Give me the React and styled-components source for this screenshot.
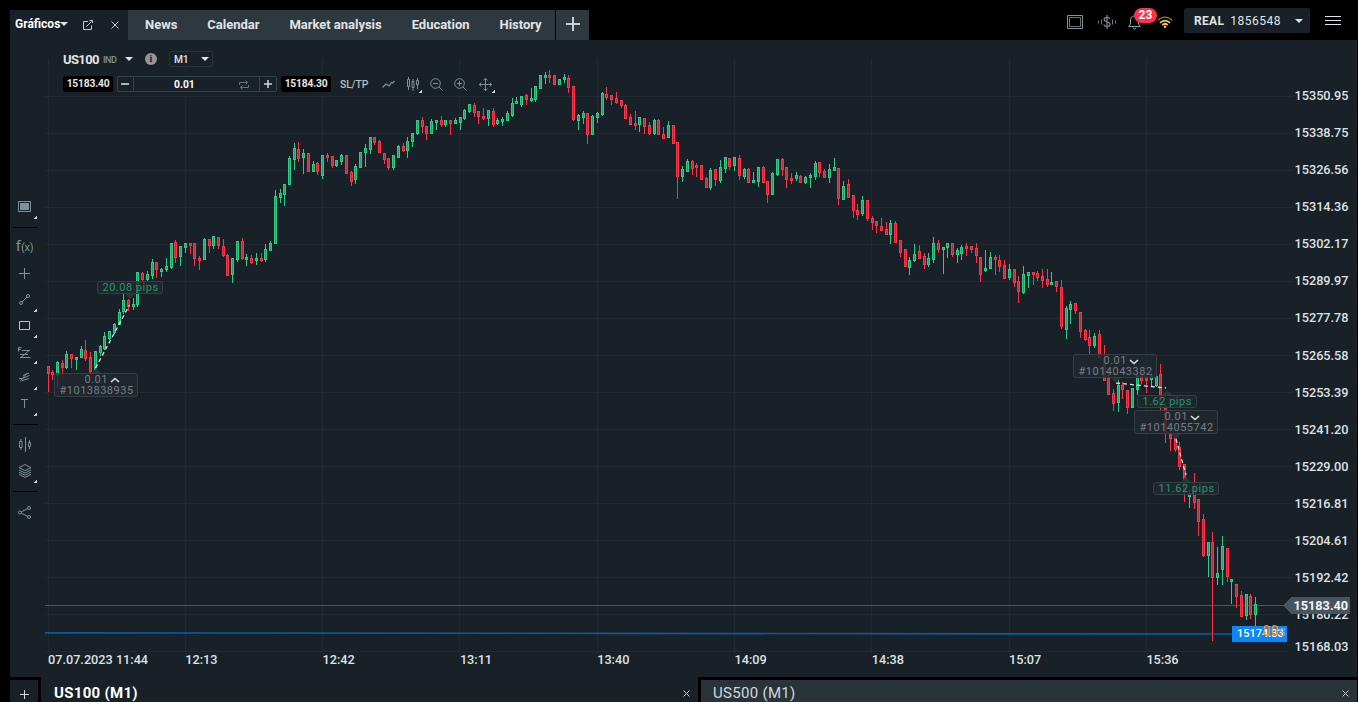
import styled, { createGlobalStyle } from "styled-components";


//==========================================================================
//  *** Data ***

const TABS = ["News", "Calendar", "Market analysis", "Education", "History"];

const PRICES = [
    "15350.95", "15338.75", "15326.56", "15314.36", "15302.17", "15289.97", "15277.78", "15265.58",
    "15253.39", "15241.20", "15229.00", "15216.81", "15204.61", "15192.42", "15180.22",
];

const TIMES = ["07.07.2023 11:44", "12:13", "12:42", "13:11", "13:40", "14:09", "14:38", "15:07", "15:36"];

// One candle per minute: direction (1 up, 0 down), high, body top, body bottom, low
const CANDLES = [
    [0,366,366,374,392],[0,370,372,375,380],[1,361,362,376,387],[0,360,363,368,377],[1,351,354,368,369],
    [0,354,354,359,368],[1,357,357,360,370],[1,346,349,358,358],[0,340,350,359,361],[0,352,357,372,373],
    [1,351,351,370,372],[1,345,346,353,356],[1,332,336,349,350],[1,331,331,339,340],[1,323,324,333,334],
    [1,309,312,325,325],[1,294,300,312,314],[0,299,300,307,311],[1,298,304,307,310],[1,272,272,305,307],
    [0,272,273,280,281],[1,271,274,280,281],[1,259,262,276,279],[0,262,262,270,278],[1,268,269,272,277],
    [1,258,266,270,272],[1,243,243,268,269],[0,240,242,258,263],[1,246,246,257,266],[1,243,243,248,253],
    [0,243,243,246,254],[0,243,243,259,266],[0,256,258,261,270],[1,238,239,260,260],[0,239,239,246,253],
    [1,236,236,246,249],[0,237,237,246,249],[0,239,246,256,257],[0,254,255,276,276],[1,258,258,275,283],
    [1,241,241,260,262],[0,238,241,259,260],[1,254,257,260,266],[0,255,258,263,264],[1,253,258,261,265],
    [0,253,258,261,262],[1,244,249,260,262],[1,241,243,251,251],[1,190,196,244,244],[1,189,193,198,203],
    [1,184,184,195,206],[1,156,158,185,185],[1,143,148,160,170],[0,142,149,159,162],[1,149,153,158,174],
    [0,153,153,172,172],[1,161,164,172,172],[0,162,163,172,175],[1,155,155,176,179],[0,153,155,158,162],
    [0,156,156,166,168],[1,160,160,166,167],[1,154,155,162,165],[0,155,155,174,174],[0,171,172,182,186],
    [1,164,166,180,184],[1,152,152,168,168],[1,144,148,153,167],[1,137,137,150,154],[0,137,137,143,145],
    [0,140,141,153,153],[0,153,153,160,164],[0,158,158,168,170],[1,155,155,168,170],[1,145,146,158,158],
    [0,143,146,151,152],[1,137,141,151,158],[1,133,133,142,147],[1,120,120,134,135],[0,117,120,127,133],
    [0,126,126,134,140],[1,119,121,134,134],[1,120,120,123,130],[0,116,120,125,127],[1,120,120,125,127],
    [0,120,120,124,135],[1,118,120,124,124],[1,117,117,123,130],[1,109,110,119,120],[1,104,104,112,113],
    [0,103,105,113,117],[0,111,111,117,124],[0,108,116,119,120],[1,110,110,119,126],[0,108,111,125,127],
    [1,118,120,124,125],[1,117,119,122,126],[1,111,113,121,121],[1,98,103,116,117],[1,97,101,104,104],
    [1,96,96,105,107],[0,94,95,100,105],[1,88,98,101,102],[1,86,86,100,102],[1,75,75,89,89],
    [1,72,75,78,84],[0,70,75,78,83],[0,75,75,85,85],[1,79,79,85,85],[1,74,77,80,83],
    [0,75,78,88,93],[0,86,86,120,121],[1,114,115,121,130],[1,111,113,118,124],[0,113,113,135,144],
    [1,115,116,135,135],[1,112,113,118,123],[1,92,93,115,116],[0,87,94,98,100],[0,95,95,100,105],
    [0,92,98,103,104],[0,100,100,106,108],[0,104,105,119,119],[0,114,117,125,125],[0,111,123,126,130],
    [1,117,117,125,132],[0,118,118,127,134],[0,122,125,134,135],[1,119,120,134,135],[0,119,120,135,135],
    [0,127,134,139,139],[1,121,125,138,138],[0,125,125,144,144],[0,142,142,177,199],[1,166,169,177,182],
    [1,159,161,172,172],[0,160,161,169,175],[0,163,165,168,177],[0,165,165,180,180],[0,177,178,188,188],
    [1,168,170,188,190],[0,169,169,180,186],[1,160,167,181,183],[1,157,157,169,173],[0,158,158,167,170],
    [1,157,157,166,171],[0,155,158,176,180],[1,168,169,177,179],[0,168,169,183,183],[1,172,180,183,183],
    [1,167,167,182,187],[0,166,167,183,183],[0,181,181,195,203],[1,172,173,195,195],[1,159,159,175,176],
    [0,158,159,170,176],[0,167,167,180,188],[0,173,178,181,184],[1,172,175,179,181],[0,175,176,183,183],
    [1,176,177,183,184],[1,173,175,178,188],[1,161,163,177,180],[0,162,162,173,177],[0,169,171,178,178],
    [1,164,169,178,183],[1,158,167,171,171],[0,168,168,199,205],[1,181,186,200,200],[0,179,184,198,198],
    [0,195,195,211,218],[0,204,210,215,220],[1,196,200,214,216],[0,200,200,219,221],[0,216,218,223,230],
    [0,221,221,226,233],[0,218,226,231,231],[0,222,229,235,235],[1,220,223,235,244],[0,221,223,243,243],
    [0,240,240,253,257],[0,249,249,267,267],[1,257,260,268,275],[1,244,254,261,262],[0,245,251,259,259],
    [0,253,256,265,269],[1,253,258,265,267],[1,237,243,260,263],[0,240,243,250,253],[1,247,247,250,274],
    [1,243,243,248,258],[0,243,243,255,257],[1,248,250,255,263],[1,245,247,254,260],[0,243,246,249,256],
    [0,246,246,250,253],[0,243,248,256,263],[0,257,257,275,282],[1,250,268,271,272],[1,252,257,269,269],
    [0,255,257,260,275],[0,255,260,267,272],[0,260,265,279,279],[1,264,269,278,280],[0,269,269,283,287],
    [0,276,281,292,303],[1,266,274,293,294],[1,272,272,276,288],[0,272,272,275,285],[0,271,273,278,281],
    [0,269,276,281,288],[0,269,279,285,287],[1,272,282,285,285],[0,281,281,287,292],[0,280,287,327,329],
    [1,306,308,330,339],[1,301,304,310,324],[0,303,303,311,314],[0,312,312,332,338],[0,329,330,340,341],
    [0,330,337,346,354],[1,333,336,346,348],[0,330,334,358,358],[0,345,358,381,381],[0,372,375,395,395],
    [0,389,393,404,411],[1,379,385,403,412],[0,382,385,390,399],[0,390,390,408,414],[1,388,388,408,408],
    [1,372,375,390,395],[0,371,373,381,384],[0,372,377,381,393],[1,373,375,380,386],[1,373,376,386,387],
    [0,364,374,408,410],[0,405,408,433,443],[0,430,433,439,451],[0,437,438,450,452],[0,442,447,467,470],
    [0,464,464,493,502],[1,490,493,497,508],[0,473,486,503,509],[0,499,499,522,536],[0,514,519,556,557],
    [1,542,542,556,577],[0,532,542,578,641],[1,547,573,578,585],[1,536,546,570,585],[0,548,548,577,582],
    [1,579,579,582,604],[0,584,584,597,608],[0,591,595,617,617],[1,594,594,616,620],[0,594,596,615,619],
    [1,597,604,615,627],
];

const candleX = (i) => Math.floor(48.01 + 4.7356 * i);


//==========================================================================
//  *** Styled components   ***

const GlobalStyle = createGlobalStyle`
    * {
        box-sizing: border-box;
    }
    body {
        margin: 0;
        background: #000;
        color: #e1e4e6;
        font-family: Roboto, "Liberation Sans", sans-serif;
        overflow: hidden;
    }
`

const Page = styled.div`
    width: 1358px;
    height: 702px;
    padding: 0 1px 0 10px;
    display: flex;
    flex-direction: column;
    overflow: hidden;
`

const Header = styled.header`
    height: 40px;
    display: flex;
    justify-content: space-between;
    flex: none;
`

const TabBar = styled.nav`
    margin-top: 10px;
    display: flex;
    font-size: 13px;
    font-weight: bold;
`

const ActiveTab = styled.div`
    width: 118px;
    padding: 0 8px 2px 5px;
    display: flex;
    align-items: center;
    background: #172127;
    color: #fff;
    font-size: 12px;

    svg {
        flex: none;
        margin-top: 2px;
    }
    svg:first-of-type {
        margin-left: 15px;
        margin-right: 18px;
    }
`

const TabGroup = styled.div`
    width: 427px;
    padding-left: 2px;
    display: flex;
    background: #2d383f;
`

const Tab = styled.div`
    padding: 0 15px;
    line-height: 30px;
    letter-spacing: -0.02px;
    white-space: nowrap;
`

const AddTab = styled.div`
    width: 33px;
    margin-left: 1px;
    padding-bottom: 2px;
    display: grid;
    place-items: center;
    background: #2d383f;
`

const Caret = styled.span`
    flex: none;
    border: 4px solid transparent;
    border-top-color: #e1e4e6;
    border-bottom: 0;
`

const HeaderTools = styled.div`
    display: flex;
    align-items: flex-start;
    padding-right: 16px;
`

const HeaderIcon = styled.span`
    position: relative;
    width: ${({ $w }) => $w}px;
    height: 44px;
    margin-right: ${({ $gap }) => $gap}px;
    display: flex;
    align-items: center;
    justify-content: center;
`

const Badge = styled.span`
    position: absolute;
    left: 6px;
    top: 8px;
    width: 23px;
    height: 15px;
    border-radius: 8px;
    background: #fb3348;
    color: #fff;
    font-size: 12px;
    font-weight: bold;
    line-height: 15px;
    text-align: center;
    z-index: 1;
`

const Account = styled.div`
    width: 126px;
    height: 25px;
    margin: 8px 15px 0 0;
    padding: 0 7px 0 10px;
    border-radius: 2px;
    display: flex;
    align-items: center;
    justify-content: space-between;
    background: #172127;
    font-size: 12px;
    letter-spacing: 0.5px;

    b {
        margin-right: 6px;
        letter-spacing: 0.3px;
    }
`

const Burger = styled.div`
    width: 16px;
    height: 9px;
    margin-top: 16px;
    border: solid #e1e4e6;
    border-width: 1px 0;
    display: flex;
    align-items: center;

    &::after {
        content: "";
        height: 1px;
        flex: 1;
        background: #e1e4e6;
    }
`

const Main = styled.main`
    height: 637px;
    display: flex;
    flex: none;
    background: #172127;
`

const Sidebar = styled.aside`
    width: 35px;
    padding: 153px 7px 0 3px;
    flex: none;
`

const Tool = styled.div`
    position: relative;
    height: 26px;
    display: grid;
    place-items: center;
    padding-right: 2px;
    padding-top: ${({ $drop }) => ($drop || 0) * 2}px;
    color: #7f929b;
`

const FxLabel = styled.span`
    font-size: 15px;
    line-height: 16px;

    small {
        font-size: 11px;
        letter-spacing: -0.3px;
    }
`

const Corner = styled.i`
    position: absolute;
    right: ${({ $right }) => $right ?? 1}px;
    bottom: ${({ $bottom }) => $bottom ?? 0}px;
    width: 3px;
    height: 3px;
    background: linear-gradient(135deg, transparent 45%, #c3ccd0 50%);
`

const Divider = styled.hr`
    height: 1px;
    margin: 8px 0 6px;
    border: 0;
    background: #000;
`

const ChartArea = styled.section`
    position: relative;
    flex: 1;
`

const ChartSvg = styled.svg`
    display: block;
    shape-rendering: crispEdges;

    text {
        font-family: Roboto, "Liberation Sans", sans-serif;
    }
`

const AxisText = styled.text`
    font-size: 12.7px;
    font-weight: ${({ $current }) => ($current ? 700 : 500)};
    fill: ${({ $current }) => ($current ? "#f4f6f7" : "#dfe2e4")};
`

const TradeText = styled.text`
    font-size: 11px;
    letter-spacing: 0.5px;
    fill: ${({ $pips }) => ($pips ? "#26966a" : "#757e84")};
`

const LevelText = styled.text`
    font-size: 11px;
    font-weight: 500;
    fill: #fff;
`

const CountdownText = styled.text`
    font-size: 14px;
    font-weight: 500;
    fill: #e8901c;

    tspan {
        font-weight: 400;
        fill: #8fa3b0;
    }
`

const ChartControls = styled.div`
    position: absolute;
    left: 17px;
    top: 9px;
`

const SymbolRow = styled.div`
    width: 152px;
    height: 20px;
    padding-left: 1px;
    display: flex;
    align-items: center;
    background: #172127;
`

const SymbolName = styled.b`
    width: 40px;
    font-size: 13px;
    letter-spacing: -0.6px;
`

const SymbolKind = styled.span`
    width: 22px;
    padding-top: 2px;
    color: #82939c;
    font-size: 9px;
    font-weight: 500;
    letter-spacing: -0.5px;
`

const Info = styled.span`
    width: 12px;
    height: 12px;
    margin: 0 12px;
    border-radius: 50%;
    background: #949494;
    color: #172127;
    font: bold 10px/12px "Liberation Serif", serif;
    text-align: center;
`

const PeriodSelect = styled.div`
    width: 44px;
    height: 16px;
    padding: 0 3px 0 4px;
    border: 1px solid #28333a;
    border-radius: 2px;
    display: flex;
    align-items: center;
    justify-content: space-between;
    font-size: 10.3px;
    font-weight: 500;
    letter-spacing: -0.3px;
`

const OrderRow = styled.div`
    height: 23px;
    padding: 0 0 1px 1px;
    margin-top: 4px;
    display: flex;
    align-items: center;
    background: #172127;
    font-size: 10.3px;
    font-weight: bold;
`

const Quote = styled.div`
    width: 50px;
    height: 16px;
    border-radius: 2px;
    background: #000;
    line-height: 16px;
    text-align: center;
    letter-spacing: -0.2px;
`

const Volume = styled.div`
    width: 160px;
    height: 16px;
    margin: 0 4px;
    border: 1px solid #35424a;
    border-radius: 2px;
    display: grid;
    grid-template-columns: 15px 1fr 16px;
    align-items: center;
    justify-items: center;

    svg {
        display: block;
    }
    > svg:first-child {
        margin-right: 2px;
    }
`

const VolumeValue = styled.div`
    width: 100%;
    height: 14px;
    padding: 0 10px 0 40px;
    border: solid #35424a;
    border-width: 0 1px;
    display: flex;
    align-items: center;
    justify-content: space-between;
    color: #fff;

    svg {
        margin-top: 2px;
    }
`

const StopLabel = styled.span`
    width: 42px;
    margin-left: 9px;
    color: #b9bfc3;
    font-size: 10.3px;
    font-weight: 500;
    letter-spacing: -0.1px;
`

const ChartTool = styled.span`
    position: relative;
    width: ${({ $w }) => $w || 24}px;
    height: 16px;
    display: flex;
    align-items: center;
    color: #7f929b;
`

const Footer = styled.footer`
    height: 25px;
    display: flex;
    flex: none;
    font-size: 15px;
    letter-spacing: 0.3px;
`

const AddChart = styled.div`
    width: 28px;
    margin: 3px 3px 0 0;
    padding-top: 7px;
    display: grid;
    place-items: center;
    background: #172127;
`

const ChartTab = styled.div`
    flex: ${({ $active }) => ($active ? "0 0 657px" : "1")};
    margin-top: ${({ $active }) => ($active ? 0 : 3)}px;
    margin-left: ${({ $active }) => ($active ? 0 : 3)}px;
    padding: ${({ $active }) => ($active ? "6px 8px 0 13px" : "3px 8px 0 12px")};
    display: flex;
    align-items: center;
    justify-content: space-between;
    background: ${({ $active }) => ($active ? "#172127" : "#29333a")};
    font-weight: ${({ $active }) => ($active ? "bold" : "normal")};
    color: ${({ $active }) => ($active ? "#fff" : "#d4d8da")};

    svg {
        margin-top: 2px;
    }
`


//==========================================================================
//  *** Icons ***

function Icon({ w = 16, h = 16, children, stroke = "currentColor", ...rest }) {
    return (
        <svg width={w} height={h} viewBox={`0 0 ${w} ${h}`} fill="none" stroke={stroke} {...rest}>
            {children}
        </svg>
    )
}

const Close = ({ size = 8 }) => (
    <Icon w={size} h={size} stroke="#c5cbce">
        <path d={`M.5 .5L${size - 0.5} ${size - 0.5}M${size - 0.5} .5L.5 ${size - 0.5}`} />
    </Icon>
)

const Plus = ({ size, color = "#d4d8da", width = 1 }) => (
    <Icon w={size} h={size} stroke={color} strokeWidth={width}>
        <path d={`M0 ${size / 2}H${size}M${size / 2} 0V${size}`} />
    </Icon>
)

const Magnifier = ({ plus }) => (
    <Icon w={13} h={13}>
        <circle cx="5.5" cy="5.5" r="4.8" />
        <path d="M9 9l3.6 3.6M3 5.5h5" />
        {plus && <path d="M5.5 3v5" />}
    </Icon>
)


//==========================================================================
//  *** Chart ***

function Candle({ index, data }) {
    const [up, high, top, bottom, low] = data
    const x = candleX(index)
    const color = up ? "#2ecc87" : "#ff3348"

    return (
        <g>
            <rect x={x} y={high} width="1" height={low - high} fill={color} />
            <rect x={x - 1} y={top} width="3" height={bottom - top} fill={color} />
            <rect x={x} y={top + 1} width="1" height={Math.max(bottom - top - 2, 0)} fill={up ? "#279a69" : "#bb2b3b"} />
        </g>
    )
}

// Bubble with a small pointer; tip is the pointer's x, down tells its side
function Bubble({ x, y, w, h, tip, down }) {
    const edge = down ? y + h : y
    const apex = down ? edge + 5 : edge - 5

    return (
        <g shapeRendering="auto">
            <rect x={x + 0.5} y={y + 0.5} width={w - 1} height={h - 1} rx="2" fill="#20282f" fillOpacity="0.82" stroke="#333e46" />
            <path d={`M${tip - 5} ${edge}L${tip} ${apex}L${tip + 5} ${edge}`} fill="#2a343b" />
        </g>
    )
}

function Pips({ x, y, w, tip, down, children }) {
    return (
        <g>
            <Bubble x={x} y={y} w={w} h={13} tip={tip} down={down} />
            <TradeText $pips x={x + 5.5} y={y + 10}>{children}</TradeText>
        </g>
    )
}

function Trade({ x, y, tip, down, id }) {
    const chevron = down ? "l4 3.5l4 -3.5" : "m0 3l4 -3.5l4 3.5"

    return (
        <g>
            <Bubble x={x} y={y} w={84} h={24} tip={tip} down={down} />
            <TradeText x={x + 30.5} y={y + 10}>0.01</TradeText>
            <TradeText x={x + 5.5} y={y + 21}>{id}</TradeText>
            <path d={`M${x + 57} ${y + 6}${chevron}`} fill="none" stroke="#dde1e3" strokeWidth="1.6" shapeRendering="auto" />
        </g>
    )
}

function Chart() {
    return (
        <ChartSvg width="1312" height="637" viewBox="45 40 1312 637">
            <g fill="#20292e">
                {PRICES.map((price, i) => (
                    <rect key={price} x="45" y={96 + i * 37} width="1248" height="1" />
                ))}
                <rect x="45" y="651" width="1242" height="1" />
                {TIMES.map((time, i) => (
                    <rect key={time} x={Math.floor(48 + i * 137.3)} y="59" width="1" height="595" />
                ))}
            </g>

            <rect x="45" y="605" width="1240" height="1" fill="#48565e" />
            <path d="M45 632.800L1232 634" stroke="#0a5ba4" strokeWidth="1.700" shapeRendering="auto" />

            {CANDLES.map((data, i) => <Candle key={i} index={i} data={data} />)}

            <g stroke="#dfe3e5" strokeWidth="1.3" strokeDasharray="4 3" shapeRendering="auto">
                <path d="M95.500 368L129.500 305" />
                <path d="M1116 383L1166 388" />
                <path d="M1176 439L1186 475" />
            </g>

            <Pips x={97} y={281} w={66} tip={130} down>20.08 pips</Pips>
            <Trade x={54} y={373} tip={96.5} id="#1013838935" />
            <Trade x={1073} y={354} tip={1116} down id="#1014043382" />
            <Pips x={1137} y={395} w={60} tip={1167}>1.62 pips</Pips>
            <Trade x={1134} y={410} tip={1176} down id="#1014055742" />
            <Pips x={1153} y={482} w={66} tip={1186}>11.62 pips</Pips>

            {PRICES.map((price, i) => (
                <AxisText key={price} x="1294.5" y={100 + i * 37 + (i > 6 ? 1 : 0)}>{price}</AxisText>
            ))}
            <AxisText x="1294.5" y="651">15168.03</AxisText>
            {TIMES.map((time, i) => (
                <AxisText key={time} x={48 + i * 137.3} y="664">{time}</AxisText>
            ))}

            <path d="M1283 605.500L1292 597H1350V614H1292Z" fill="#48555e" />
            <AxisText $current x="1293.5" y="610">15183.40</AxisText>

            <rect x="1232" y="626" width="55" height="16" fill="#0a86ff" />
            <LevelText x="1237" y="637">15174.33</LevelText>
            <CountdownText x="1262.5" y="636">00<tspan>s</tspan></CountdownText>
        </ChartSvg>
    )
}


//==========================================================================
//  *** Page sections ***

function TopBar() {
    return (
        <Header>
            <TabBar>
                <ActiveTab>
                    Gráficos
                    <Caret />
                    <Icon w={10} h={10} stroke="#c5cbce">
                        <path d="M5 1.500H.5v8h8V5.500M3.500 6.500L8.500 1.500M6.500 .5h3V3" />
                    </Icon>
                    <Close />
                </ActiveTab>
                <TabGroup>
                    {TABS.map((name) => <Tab key={name}>{name}</Tab>)}
                </TabGroup>
                <AddTab><Plus size={14} width={2} color="#c9ced1" /></AddTab>
            </TabBar>

            <HeaderTools>
                <HeaderIcon $w={16} $gap={15}>
                    <Icon w={16} h={14} stroke="#82939c">
                        <path d="M.5 .5h15v13H.5z" />
                        <path d="M2.500 2.500h11v9h-11z" stroke="#66757d" />
                    </Icon>
                </HeaderIcon>
                <HeaderIcon $w={18} $gap={12}>
                    <Icon w={18} h={14} stroke="#71818a">
                        <path d="M12 4C11.500 2.700 10.500 2.400 9 2.400C7.300 2.400 6.200 3.200 6.200 4.500C6.200 7.700 12 6.200 12 9.500C12 10.900 10.700 11.600 9 11.600C7.300 11.600 6.200 10.900 6 9.500M9 0v14" strokeWidth="1.300" />
                        <path d="M.5 5.500v3M3.500 4.500v5M14.500 4.500v5M17.500 5.500v3" />
                    </Icon>
                </HeaderIcon>
                <HeaderIcon $w={13} $gap={16}>
                    <Icon w={13} h={16} stroke="#8fa0a9">
                        <path d="M.7 12.500h11.600L10.500 10V6C10.500 3.500 9 2 6.500 2S2.500 3.500 2.500 6v4zM5 13.500c0 2 3 2 3 0" />
                    </Icon>
                    <Badge>23</Badge>
                </HeaderIcon>
                <HeaderIcon $w={16} $gap={11}>
                    <Icon w={16} h={12} strokeWidth="1.800">
                        <path d="M.8 4.500C5 0 11 0 15.200 4.500" stroke="#8d7a4c" strokeWidth="1.200" />
                        <path d="M3 6.800c3-3 7-3 10 0M5.300 9c1.700-1.600 3.700-1.600 5.400 0" stroke="#ffc94d" />
                        <circle cx="8" cy="10.700" r="1.200" fill="#ffc94d" stroke="none" />
                    </Icon>
                </HeaderIcon>
                <Account>
                    <span><b>REAL</b>1856548</span>
                    <Caret />
                </Account>
                <Burger />
            </HeaderTools>
        </Header>
    )
}

function DrawingTools() {
    return (
        <Sidebar>
            <Tool>
                <Icon w={13} h={11}><path d="M.5 .5h12v10H.5z" /><path d="M2 2h9v7H2z" fill="currentColor" stroke="none" /></Icon>
                <Corner />
            </Tool>
            <Divider />
            <Tool>
                <FxLabel>f<small>(x)</small></FxLabel>
            </Tool>
            <Tool><Plus size={11} color="#7f929b" /></Tool>
            <Tool>
                <Icon w={11} h={11}><circle cx="9" cy="2" r="1.500" /><circle cx="2" cy="9" r="1.500" /><path d="M3 8l5-5" /></Icon>
                <Corner />
            </Tool>
            <Tool>
                <Icon w={11} h={9} stroke="#b8c2c7"><path d="M.5 .5h10v8H.5z" /></Icon>
                <Corner />
            </Tool>
            <Tool $drop={1.5}>
                <Icon w={13} h={12}><path d="M.5 4.500V.5H3.500M.5 2.500h2.500M4 3.500h8M2 7.500h8M2 10.500h10.500M11 3.500L3 10.500" /></Icon>
                <Corner />
            </Tool>
            <Tool>
                <Icon w={11} h={10}><path d="M1 9.500L8 1M0 6.500h3l7.500-3M3 8.500l7-2M4 3.500l6-2.500" /></Icon>
                <Corner />
            </Tool>
            <Tool $drop={0.5}>
                <Icon w={7} h={9}><path d="M0 .5h7M3.500 .5V9" /></Icon>
                <Corner />
            </Tool>
            <Divider />
            <Tool>
                <Icon w={12} h={15}><path d="M6.500 0v15M2 2v2M2 11v2M.5 4.500h2.500v6H.5zM10.500 3v2M10.500 10v2M9.500 5.500h2v4h-2z" /></Icon>
            </Tool>
            <Tool $drop={1}>
                <Icon w={14} h={14}><path d="M7 .6l6 3-6 3-6-3zM1 6l6 3 6-3M1 8.200l6 3 6-3M1 10.400l6 3 6-3" /></Icon>
                <Corner />
            </Tool>
            <Divider />
            <Tool $drop={1}>
                <Icon w={13} h={13}><circle cx="2" cy="6.500" r="1.500" /><circle cx="11" cy="2" r="1.500" /><circle cx="11" cy="11" r="1.500" /><path d="M3.400 5.800l6.200-3.100M3.400 7.200l6.200 3.100" /></Icon>
            </Tool>
        </Sidebar>
    )
}

function Controls() {
    return (
        <ChartControls>
            <SymbolRow>
                <SymbolName>US100</SymbolName>
                <SymbolKind>IND</SymbolKind>
                <Caret />
                <Info>i</Info>
                <PeriodSelect>M1<Caret /></PeriodSelect>
            </SymbolRow>
            <OrderRow>
                <Quote>15183.40</Quote>
                <Volume>
                    <Icon w={8} h={2}><path d="M0 1h8" strokeWidth="1.500" /></Icon>
                    <VolumeValue>
                        0.01
                        <Icon w={10} h={10} stroke="#66757d"><path d="M.5 5V2.500h8M6.500 .5l2 2-2 2M9.500 5v2.500h-8M3.500 5.500l-2 2 2 2" /></Icon>
                    </VolumeValue>
                    <Plus size={8} width={1.5} />
                </Volume>
                <Quote>15184.30</Quote>
                <StopLabel>SL/TP</StopLabel>
                <ChartTool $w={25}>
                    <Icon w={13} h={8}><path d="M.5 7.500l3.500-3.500 3 2 2.500-3.500 1 .5L12.500 1" strokeWidth="1.200" /></Icon>
                </ChartTool>
                <ChartTool $w={23}>
                    <Icon w={12} h={14}><path d="M1.500 0v2M1.500 10v3M.5 2.500h2v7h-2zM6 2v2M6 11v3M5 4.500h2v6H5zM10.500 1v2M10.500 8v4M9.500 3.500h2v4h-2z" /></Icon>
                    <Corner $right={8} $bottom={-1} />
                </ChartTool>
                <ChartTool><Magnifier /></ChartTool>
                <ChartTool $w={25}><Magnifier plus /></ChartTool>
                <ChartTool $w={17}>
                    <Icon w={13} h={13}><path d="M0 6.500h13M6.500 0v13M4.500 2.200L6.500 .5l2 1.700M4.500 10.800l2 1.700 2-1.700M2.200 4.500L.5 6.500l1.700 2M10.800 4.500l1.700 2-1.700 2" /></Icon>
                    <Corner $right={1} $bottom={-1} />
                </ChartTool>
            </OrderRow>
        </ChartControls>
    )
}

function App() {
    return (
        <>
            <GlobalStyle />
            <Page>
                <TopBar />
                <Main>
                    <DrawingTools />
                    <ChartArea>
                        <Chart />
                        <Controls />
                    </ChartArea>
                </Main>
                <Footer>
                    <AddChart><Plus size={9} /></AddChart>
                    <ChartTab $active>US100 (M1)<Close size={7} /></ChartTab>
                    <ChartTab>US500 (M1)<Close size={7} /></ChartTab>
                </Footer>
            </Page>
        </>
    )
}


export default App;
